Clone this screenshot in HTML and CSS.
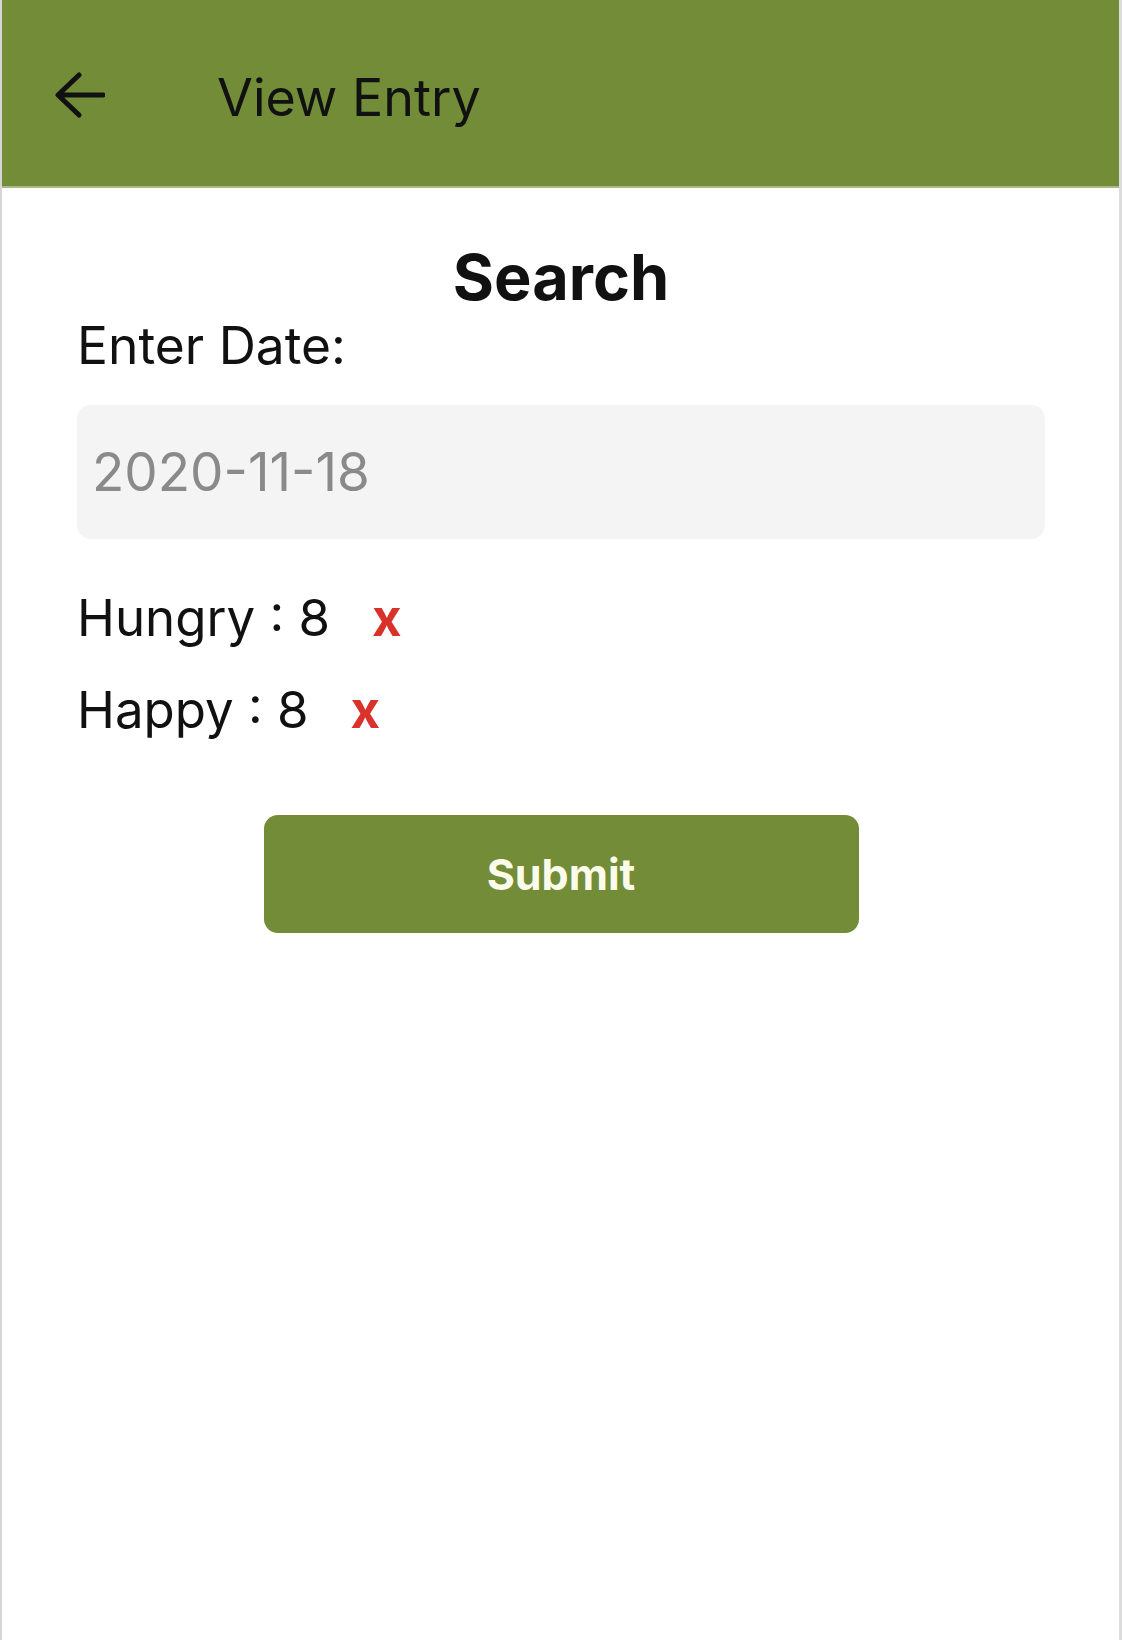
FILE: index.html
```html
<!DOCTYPE html>
<html>
<head>
<meta charset="utf-8">
<link rel="stylesheet" href="styles.css">
</head>
<body>
<div class="screen">
  <header class="topbar">
    <svg class="back" width="51" height="46" viewBox="0 0 51 46">
      <path d="M49 23H5M25 3L4 23L25 43" fill="none" stroke="#111" stroke-width="5" stroke-linecap="round" stroke-linejoin="round"/>
    </svg>
    <div class="title">View Entry</div>
  </header>
  <main class="content">
    <h1 class="heading">Search</h1>
    <div class="label">Enter Date:</div>
    <div class="field">2020-11-18</div>
    <div class="entry"><span>Hungry : 8</span><span class="remove">x</span></div>
    <div class="entry"><span>Happy : 8</span><span class="remove">x</span></div>
    <div class="actions"><button class="submit">Submit</button></div>
  </main>
</div>
</body>
</html>
```
FILE: styles.css
```css
html, body {
  margin: 0;
  padding: 0;
  background: #fff;
}
body {
  font-family: Inter, "Noto Sans", sans-serif;
  color: #111;
}
.screen {
  width: 1122px;
  height: 1640px;
  box-sizing: border-box;
  border-left: 2px solid #d6d6d6;
  border-right: 3px solid #dcdcdc;
}
.topbar {
  height: 188px;
  box-sizing: border-box;
  background: #728c38;
  border-bottom: 2px solid #a9b98a;
  display: flex;
  align-items: flex-start;
  padding: 66px 0 0 52px;
}
.back {
  margin-top: 6px;
  flex: none;
}
.title {
  margin-left: 112px;
  font-size: 52px;
  line-height: 63px;
  color: #111;
}
.content {
  padding: 0 74px 0 75px;
}
.heading {
  margin: 53px 0 0;
  text-align: center;
  font-size: 63px;
  line-height: 72px;
  font-weight: 700;
}
.label {
  margin-top: 2px;
  font-size: 51.5px;
  line-height: 60px;
}
.field {
  margin-top: 30px;
  height: 134px;
  background: #f4f4f4;
  border-radius: 14px;
  display: flex;
  align-items: center;
  padding-left: 15px;
  font-size: 53px;
  color: #8a8a8a;
}
.entry {
  margin-top: 0;
  font-size: 51px;
  line-height: 92px;
  display: flex;
  align-items: baseline;
}
.field + .entry {
  margin-top: 33px;
}
.remove {
  margin-left: 42px;
  color: #d8322a;
  font-weight: 700;
}
.actions {
  display: flex;
  justify-content: center;
  margin-top: 59px;
}
.submit {
  width: 595px;
  height: 118px;
  border: none;
  border-radius: 14px;
  background: #728c38;
  color: #fbfbea;
  font-family: Inter, "Noto Sans", sans-serif;
  font-size: 43px;
  font-weight: 700;
}
```
